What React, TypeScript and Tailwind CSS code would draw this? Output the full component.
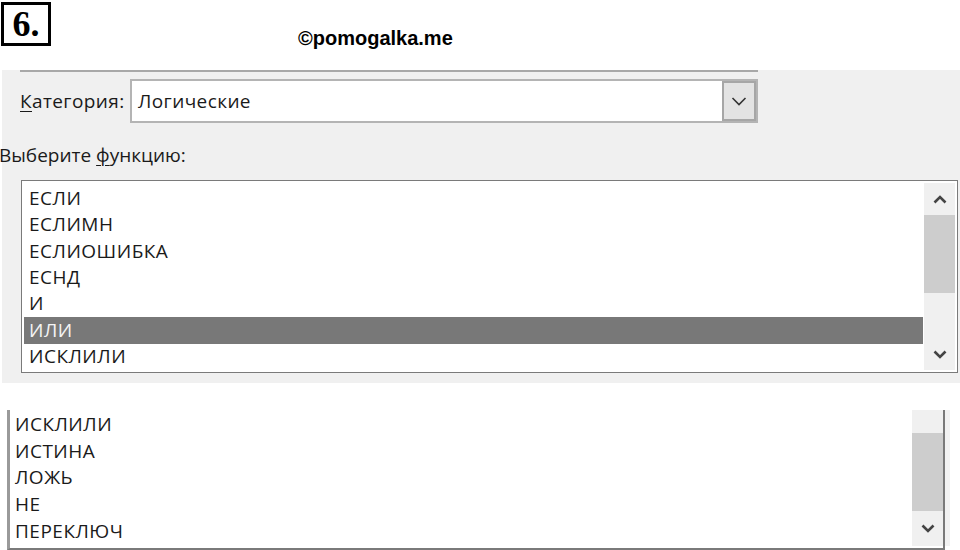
import React from "react";

const font = { fontFamily: '"Open Sans", "Noto Sans", sans-serif' };

function ChevronDownThin() {
  return (
    <svg width="16" height="10" viewBox="0 0 16 10">
      <path d="M1.5 2 L8 8.5 L14.5 2" fill="none" stroke="#333" strokeWidth="1.6" />
    </svg>
  );
}

function ChevronBold({ up }: { up?: boolean }) {
  return (
    <svg width="14" height="9" viewBox="0 0 14 9">
      <path
        d={up ? "M1.5 7.5 L7 2 L12.5 7.5" : "M1.5 1.5 L7 7 L12.5 1.5"}
        fill="none"
        stroke="#444"
        strokeWidth="2.6"
      />
    </svg>
  );
}

const list1 = ["ЕСЛИ", "ЕСЛИМН", "ЕСЛИОШИБКА", "ЕСНД", "И", "ИЛИ", "ИСКЛИЛИ"];
const list2 = ["ИСКЛИЛИ", "ИСТИНА", "ЛОЖЬ", "НЕ", "ПЕРЕКЛЮЧ"];

export default function App() {
  return (
    <div className="w-[960px] h-[550px] bg-white overflow-hidden text-[#1a1a1a]" style={font}>
      {/* header */}
      <div className="h-[70px] flex items-start">
        <div
          className="mt-[2px] ml-[1px] w-[50px] h-[44px] border-[3px] border-black flex items-center justify-center text-[36px] font-bold leading-none text-black"
          style={{ fontFamily: '"Liberation Serif", "DejaVu Serif", serif' }}
        >
          6.
        </div>
        <div
          className="ml-[247px] mt-[28px] text-[20px] font-bold text-black leading-none"
          style={{ fontFamily: '"Liberation Sans", Arial, sans-serif' }}
        >
          ©pomogalka.me
        </div>
      </div>

      {/* gray dialog panel */}
      <div className="ml-[2px] h-[313px] bg-[#f0f0f0] flex flex-col">
        <div className="ml-[18px] w-[738px] h-[2px] bg-[#a8a8a8]" />
        <div className="mt-[7px] flex items-center h-[44px]">
          <div className="ml-[18px] w-[110px] text-[19px] tracking-[0.4px]">
            <span className="underline underline-offset-[3px] decoration-1">К</span>атегория:
          </div>
          <div className="w-[628px] h-[44px] border-2 border-[#b4b4b4] bg-white flex">
            <div className="flex-1 flex items-center pl-[6px] text-[19px] tracking-[0.4px]">Логические</div>
            <div className="w-[34px] h-full bg-[#e3e3e3] border-2 border-[#a6a6a6] flex items-center justify-center">
              <ChevronDownThin />
            </div>
          </div>
        </div>
        <div className="mt-[20px] ml-[-3px] text-[19px] leading-[24px]">
          Выберите <span className="underline underline-offset-[3px] decoration-1">ф</span>ункцию:
        </div>
        <div className="mt-[13px] ml-[19px] w-[937px] h-[193px] bg-white border border-[#7a7a7a] flex p-[2px]">
          <div className="flex-1 flex flex-col pt-[2px]">
            {list1.map((t) => (
              <div
                key={t}
                className={
                  "h-[26.7px] flex items-center pl-[5px] text-[19px] tracking-[0.5px] leading-none " +
                  (t === "ИЛИ" ? "bg-[#787878] text-[#f4f4f4]" : "")
                }
              >
                {t}
              </div>
            ))}
          </div>
          <div className="w-[31px] ml-[1px] bg-[#f0f0f0] flex flex-col">
            <div className="h-[32px] flex items-center justify-center">
              <ChevronBold up />
            </div>
            <div className="h-[78px] bg-[#cdcdcd]" />
            <div className="flex-1 flex items-end justify-center pb-[11px]">
              <ChevronBold />
            </div>
          </div>
        </div>
      </div>

      {/* second list (cropped) */}
      <div className="mt-[27px] ml-[7px] w-[943px] h-[140px] flex">
        <div className="w-[938px] h-full bg-white border-l-[3px] border-l-[#9a9a9a] border-r-2 border-r-[#7a7a7a] border-b-2 border-b-[#7a7a7a] flex">
          <div className="flex-1 flex flex-col pt-[1px]">
            {list2.map((t) => (
              <div key={t} className="h-[26.7px] flex items-center pl-[5px] text-[19px] tracking-[0.5px] leading-none">
                {t}
              </div>
            ))}
          </div>
          <div className="w-[31px] mb-[2px] bg-[#f0f0f0] flex flex-col">
            <div className="h-[23px]" />
            <div className="h-[78px] bg-[#cdcdcd]" />
            <div className="flex-1 flex items-center justify-center">
              <ChevronBold />
            </div>
          </div>
        </div>
        <div className="w-[5px] h-[136px] bg-[#f2f2f2]" />
      </div>
    </div>
  );
}
